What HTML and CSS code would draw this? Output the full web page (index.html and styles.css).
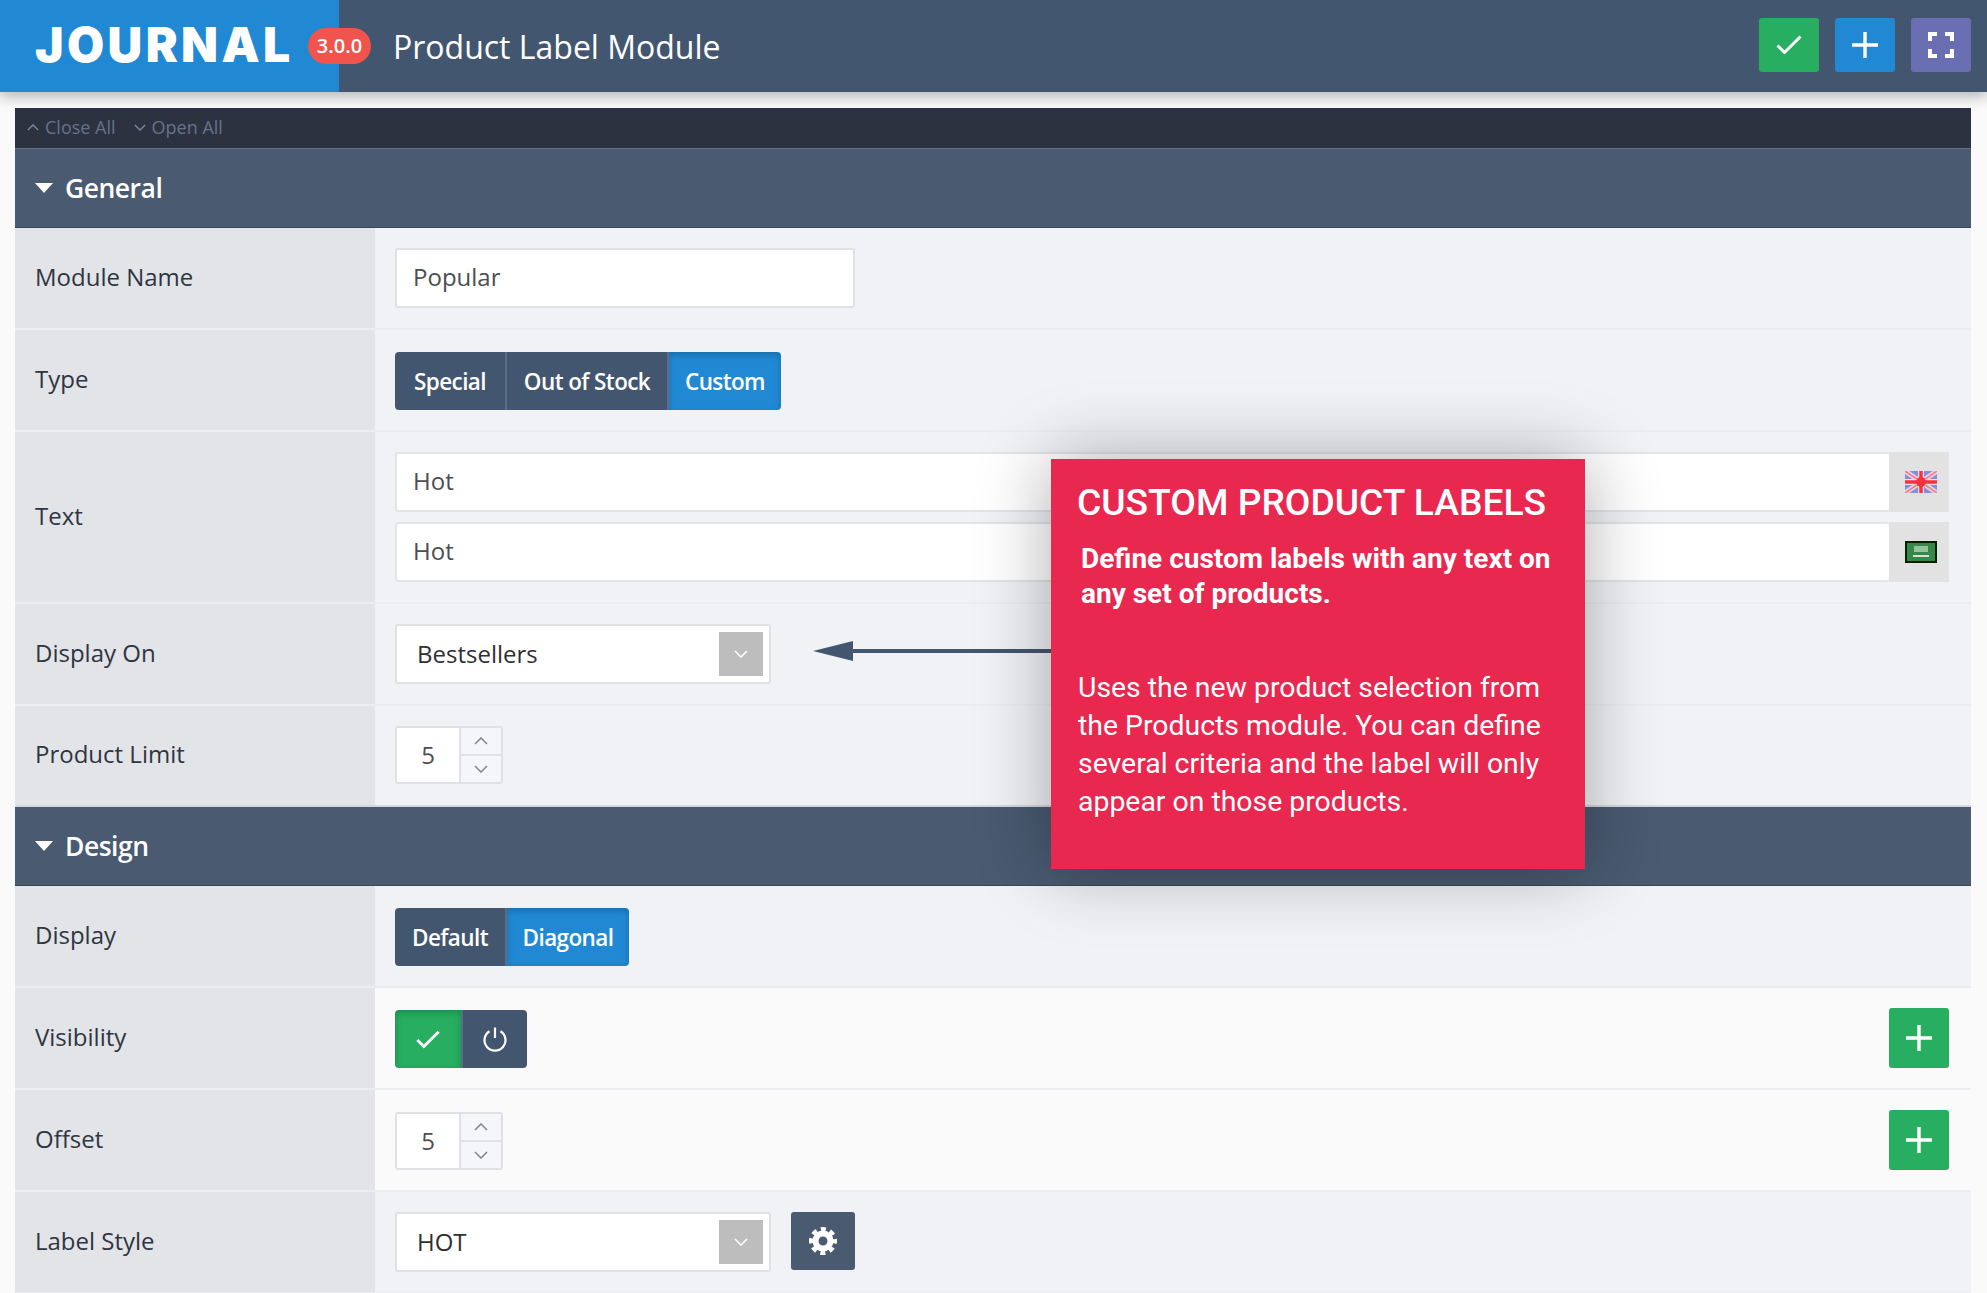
FILE: index.html
```html
<!DOCTYPE html>
<html lang="en">
<head>
  <meta charset="UTF-8">
  <title>Product Label Module</title>
  <link rel="stylesheet" href="styles.css">
</head>
<body>
  <svg class="defs" width="0" height="0">
    <symbol id="i-check" viewBox="0 0 26 20"><path d="M1.5 10.5 8.5 17.5 24.5 1.5" fill="none" stroke="#fff" stroke-width="3"/></symbol>
    <symbol id="i-plus" viewBox="0 0 26 26"><path d="M13 0V26M0 13H26" fill="none" stroke="#fff" stroke-width="3.4"/></symbol>
    <symbol id="i-full" viewBox="0 0 26 26"><path d="M9 2H2V9M17 2H24V9M9 24H2V17M17 24H24V17" fill="none" stroke="#fff" stroke-width="4"/></symbol>
    <symbol id="i-up" viewBox="0 0 14 8"><path d="M1 7 7 1 13 7" fill="none" stroke="#85888f" stroke-width="1.6"/></symbol>
    <symbol id="i-down" viewBox="0 0 14 8"><path d="M1 1 7 7 13 1" fill="none" stroke="#85888f" stroke-width="1.6"/></symbol>
    <symbol id="i-drop" viewBox="0 0 14 8"><path d="M1 1 7 7 13 1" fill="none" stroke="#fff" stroke-width="1.6"/></symbol>
    <symbol id="i-up-dim" viewBox="0 0 14 8"><path d="M1 7 7 1 13 7" fill="none" stroke="#7a879c" stroke-width="1.6"/></symbol>
    <symbol id="i-down-dim" viewBox="0 0 14 8"><path d="M1 1 7 7 13 1" fill="none" stroke="#7a879c" stroke-width="1.6"/></symbol>
  </svg>

  <header class="topbar">
    <div class="logo">
      <span class="logo-text">JOURNAL</span>
      <span class="version">3.0.0</span>
    </div>
    <h1 class="page-title">Product Label Module</h1>
    <div class="top-actions">
      <a class="top-btn green"><svg class="ic-check"><use href="#i-check"/></svg></a>
      <a class="top-btn blue"><svg class="ic-plus"><use href="#i-plus"/></svg></a>
      <a class="top-btn purple"><svg class="ic-plus"><use href="#i-full"/></svg></a>
    </div>
  </header>

  <main class="panel">
    <div class="toolbar">
      <a class="tool-link"><svg class="ic-tool"><use href="#i-up-dim"/></svg>Close All</a>
      <a class="tool-link"><svg class="ic-tool"><use href="#i-down-dim"/></svg>Open All</a>
    </div>

    <section>
      <h2 class="section-head"><span class="caret"></span>General</h2>

      <div class="row">
        <div class="label">Module Name</div>
        <div class="field"><div class="input short">Popular</div></div>
      </div>

      <div class="row">
        <div class="label">Type</div>
        <div class="field field-type">
          <div class="btn-group">
            <span class="seg seg-special">Special</span>
            <span class="seg seg-stock">Out of Stock</span>
            <span class="seg seg-custom active">Custom</span>
          </div>
        </div>
      </div>

      <div class="row">
        <div class="label">Text</div>
        <div class="field stack">
          <div class="lang-input">
            <div class="input wide">Hot</div>
            <div class="addon">
              <svg class="flag" viewBox="0 0 32 22">
                <rect width="32" height="22" fill="#7f90e4"/>
                <path d="M0 0 32 22M32 0 0 22" stroke="#f3cfd8" stroke-width="5"/>
                <path d="M0 0 32 22M32 0 0 22" stroke="#ee7f90" stroke-width="1.6"/>
                <path d="M16 0V22M0 11H32" stroke="#f9d9de" stroke-width="6"/>
                <path d="M16 0V22M0 11H32" stroke="#f8303f" stroke-width="3.500"/>
                <circle cx="16" cy="11" r="5" fill="#f8303f"/>
              </svg>
            </div>
          </div>
          <div class="lang-input">
            <div class="input wide">Hot</div>
            <div class="addon">
              <svg class="flag" viewBox="0 0 32 22">
                <rect width="32" height="22" fill="#021f04"/>
                <rect x="2" y="2" width="28" height="18" fill="#37864a"/>
                <rect x="9" y="5" width="14" height="6" fill="#93c59b"/>
                <rect x="8" y="14" width="16" height="2" fill="#cfe6d2"/>
              </svg>
            </div>
          </div>
        </div>
      </div>

      <div class="row">
        <div class="label">Display On</div>
        <div class="field">
          <div class="select">Bestsellers<span class="select-arrow"><svg class="ic-drop"><use href="#i-drop"/></svg></span></div>
        </div>
      </div>

      <div class="row last">
        <div class="label">Product Limit</div>
        <div class="field field-limit">
          <div class="spinner">
            <span class="spin-value">5</span>
            <span class="spin-btns">
              <span class="spin-btn"><svg class="ic-spin"><use href="#i-up"/></svg></span>
              <span class="spin-btn"><svg class="ic-spin"><use href="#i-down"/></svg></span>
            </span>
          </div>
        </div>
      </div>
    </section>

    <section>
      <h2 class="section-head"><span class="caret"></span>Design</h2>

      <div class="row">
        <div class="label">Display</div>
        <div class="field field-display">
          <div class="btn-group">
            <span class="seg seg-default">Default</span>
            <span class="seg seg-diagonal active">Diagonal</span>
          </div>
        </div>
      </div>

      <div class="row light">
        <div class="label">Visibility</div>
        <div class="field spread">
          <div class="btn-group">
            <span class="seg seg-on"><svg class="ic-on"><use href="#i-check"/></svg></span>
            <span class="seg seg-off">
              <svg class="ic-power" viewBox="0 0 26 26"><path d="M13 1.500V12M7.500 5.200A10.500 10.500 0 1 0 18.500 5.200" fill="none" stroke="#fff" stroke-width="2.200"/></svg>
            </span>
          </div>
          <a class="add-btn"><svg class="ic-plus"><use href="#i-plus"/></svg></a>
        </div>
      </div>

      <div class="row light">
        <div class="label">Offset</div>
        <div class="field spread">
          <div class="spinner">
            <span class="spin-value">5</span>
            <span class="spin-btns">
              <span class="spin-btn"><svg class="ic-spin"><use href="#i-up"/></svg></span>
              <span class="spin-btn"><svg class="ic-spin"><use href="#i-down"/></svg></span>
            </span>
          </div>
          <a class="add-btn"><svg class="ic-plus"><use href="#i-plus"/></svg></a>
        </div>
      </div>

      <div class="row">
        <div class="label">Label Style</div>
        <div class="field inline">
          <div class="select">HOT<span class="select-arrow"><svg class="ic-drop"><use href="#i-drop"/></svg></span></div>
          <a class="gear-btn">
            <svg class="ic-gear" viewBox="0 0 28 28">
              <circle cx="14" cy="14" r="7.500" fill="none" stroke="#fff" stroke-width="6"/>
              <circle cx="14" cy="14" r="11.500" fill="none" stroke="#fff" stroke-width="5" stroke-dasharray="4.900 4.130" stroke-dashoffset="2.450"/>
            </svg>
          </a>
        </div>
      </div>
    </section>
  </main>

  <div class="pointer"><span class="pointer-head"></span><span class="pointer-line"></span></div>

  <aside class="callout">
    <h3 class="callout-title">CUSTOM PRODUCT LABELS</h3>
    <p class="callout-lead">Define custom labels with any text on any set of products.</p>
    <p class="callout-body">Uses the new product selection from the Products module. You can define several criteria and the label will only appear on those products.</p>
  </aside>
</body>
</html>
```

FILE: styles.css
```css
html, body {
  margin: 0;
  height: 1293px;
  overflow: hidden;
}
body {
  position: relative;
  font-family: "Open Sans", sans-serif;
  background: #fafafa;
  color: #2f3542;
}
.defs {
  position: absolute;
}
svg {
  display: block;
}

/* top bar */
.topbar {
  display: flex;
  align-items: center;
  height: 92px;
  background: #43566f;
  box-shadow: 0 4px 14px rgba(0, 0, 0, .3);
  position: relative;
}
.logo {
  display: flex;
  align-items: center;
  box-sizing: border-box;
  width: 339px;
  height: 92px;
  padding: 0 0 3px 35px;
  background: #2189d4;
  position: relative;
}
.logo-text {
  font-family: Inter, sans-serif;
  font-weight: 900;
  font-size: 48px;
  letter-spacing: 3.400px;
  color: #fff;
}
.version {
  position: absolute;
  left: 308px;
  top: 28px;
  width: 63px;
  height: 36px;
  line-height: 36px;
  text-align: center;
  border-radius: 18px;
  background: #f0544c;
  color: #fff;
  font-size: 20px;
  font-weight: 600;
}
.page-title {
  margin: 0 0 0 54px;
  font-size: 32px;
  font-weight: 400;
  color: #fff;
}
.top-actions {
  display: flex;
  gap: 16px;
  margin: 0 16px 2px auto;
}
.top-btn {
  display: flex;
  align-items: center;
  justify-content: center;
  width: 60px;
  height: 54px;
  border-radius: 3px;
}
.green { background: #27ae60; }
.blue { background: #2189d4; }
.purple { background: #6a6fb3; }
.ic-check {
  width: 26px;
  height: 20px;
}
.ic-plus {
  width: 26px;
  height: 26px;
}

/* panel */
.panel {
  margin: 16px 16px 0 15px;
}
.toolbar {
  display: flex;
  align-items: center;
  gap: 18px;
  box-sizing: content-box;
  height: 38px;
  padding: 0 0 2px 12px;
  background: #2c3240;
  border-bottom: 1px solid #64748a;
}
.tool-link {
  display: flex;
  align-items: center;
  gap: 6px;
  font-size: 18px;
  color: #66738a;
}
.ic-tool {
  width: 12px;
  height: 7px;
}
.section-head {
  display: flex;
  align-items: center;
  gap: 12px;
  height: 78px;
  margin: 0;
  padding-left: 20px;
  background: #495a71;
  border-bottom: 1px solid #3a4656;
  color: #fff;
  font-size: 26.500px;
  font-weight: 600;
  letter-spacing: -.5px;
  line-height: 1;
}
.caret {
  width: 0;
  height: 0;
  border-left: 9px solid transparent;
  border-right: 9px solid transparent;
  border-top: 10px solid #fff;
}

/* form rows */
.row {
  display: grid;
  grid-template-columns: 360px 1fr;
  border-bottom: 2px solid #ebedf0;
  background: #f0f2f6;
}
.row.last {
  border-bottom: 2px solid #d5d8dd;
}
.row.light {
  background: #fafafa;
}
.label {
  display: flex;
  align-items: center;
  padding: 0 0 4px 20px;
  background: #e2e4e8;
  font-size: 24px;
}
.field {
  padding: 20px 22px 20px 20px;
}
.field-type {
  padding-top: 22px;
}
.field-limit {
  padding-bottom: 21px;
}
.field-display {
  padding-top: 22px;
}
.stack {
  display: flex;
  flex-direction: column;
  gap: 10px;
}
.spread {
  display: flex;
  justify-content: space-between;
  align-items: flex-end;
}
.inline {
  display: flex;
  align-items: flex-start;
  gap: 20px;
}
.input {
  box-sizing: border-box;
  display: flex;
  align-items: center;
  height: 60px;
  padding: 0 0 3px 16px;
  background: #fff;
  border: 2px solid #dfe1e5;
  border-radius: 3px;
  font-size: 24px;
  color: #4e4e52;
}
.short {
  width: 460px;
}
.wide {
  flex: 1;
  border-color: #e3e4e8;
  border-right: 0;
}
.lang-input {
  display: flex;
}
.addon {
  display: flex;
  align-items: center;
  justify-content: center;
  box-sizing: border-box;
  width: 60px;
  height: 60px;
  padding-left: 4px;
  background: #e2e2e2;
}
.flag {
  width: 32px;
  height: 22px;
  filter: blur(.7px);
}

/* segmented buttons */
.btn-group {
  display: inline-flex;
  height: 58px;
  border-radius: 4px;
  overflow: hidden;
}
.seg {
  display: flex;
  align-items: center;
  justify-content: center;
  box-sizing: border-box;
  height: 58px;
  background: #43566f;
  color: #fff;
  font-size: 22.500px;
  font-weight: 600;
  letter-spacing: -.6px;
  border-left: 2px solid #5c6e85;
}
.seg:first-child {
  border-left: 0;
}
.seg.active {
  background: #2189d4;
  box-shadow: inset 0 3px 7px rgba(0, 0, 0, .2);
}
.seg-special { width: 110px; }
.seg-stock { width: 162px; }
.seg-custom { width: 114px; }
.seg-default { width: 110px; }
.seg-diagonal { width: 124px; }
.seg-on {
  width: 66px;
  background: #27ae60;
  box-shadow: inset 0 3px 7px rgba(0, 0, 0, .2);
}
.seg-off { width: 66px; }
.ic-on {
  width: 24px;
  height: 19px;
}
.ic-power {
  width: 26px;
  height: 26px;
}
.add-btn {
  display: flex;
  align-items: center;
  justify-content: center;
  width: 60px;
  height: 60px;
  border-radius: 3px;
  background: #27ae60;
}

/* select */
.select {
  box-sizing: border-box;
  display: flex;
  align-items: center;
  width: 376px;
  height: 60px;
  padding-left: 20px;
  background: #fff;
  border: 2px solid #dfe1e5;
  border-radius: 3px;
  font-size: 24px;
  line-height: 30px;
  color: #2f2f33;
}
.select-arrow {
  display: flex;
  align-items: center;
  justify-content: center;
  width: 44px;
  height: 44px;
  margin-left: auto;
  margin-right: 6px;
  background: #bdbdbd;
}
.ic-drop {
  width: 14px;
  height: 8px;
}
.gear-btn {
  display: flex;
  align-items: center;
  justify-content: center;
  width: 64px;
  height: 58px;
  border-radius: 3px;
  background: #495a71;
}
.ic-gear {
  width: 28px;
  height: 28px;
}

/* number spinner */
.spinner {
  box-sizing: border-box;
  display: inline-flex;
  width: 108px;
  height: 58px;
  background: #f5f6fa;
  border: 2px solid #dfe1e5;
  border-radius: 3px;
}
.spin-value {
  display: flex;
  align-items: center;
  justify-content: center;
  box-sizing: border-box;
  width: 64px;
  padding-bottom: 2px;
  background: #fff;
  border-right: 2px solid #dfe1e5;
  font-size: 24px;
  color: #4e4e52;
}
.spin-btns {
  display: flex;
  flex: 1;
  flex-direction: column;
}
.spin-btn {
  display: flex;
  flex: 1;
  align-items: center;
  justify-content: center;
}
.spin-btn + .spin-btn {
  border-top: 2px solid #dfe1e5;
}
.ic-spin {
  width: 14px;
  height: 8px;
}

/* callout over the form */
.callout {
  position: absolute;
  left: 1051px;
  top: 459px;
  box-sizing: border-box;
  width: 534px;
  height: 410px;
  padding: 22px 20px 0 26px;
  background: #e9284f;
  color: #fff;
  font-family: Roboto, sans-serif;
  box-shadow: 0 0 70px rgba(0, 0, 0, .32);
}
.callout-title {
  margin: 0;
  font-size: 37.200px;
  font-weight: 500;
  line-height: 42px;
}
.callout-lead {
  margin: 18px 0 0 4px;
  font-size: 28px;
  font-weight: 700;
  line-height: 35px;
}
.callout-body {
  margin: 58px 0 0 1px;
  font-size: 28.400px;
  line-height: 38px;
}
.pointer {
  position: absolute;
  left: 813px;
  top: 641px;
  display: flex;
  align-items: center;
  width: 238px;
  height: 20px;
}
.pointer-head {
  border-top: 10px solid transparent;
  border-bottom: 10px solid transparent;
  border-right: 40px solid #43566f;
}
.pointer-line {
  flex: 1;
  height: 4px;
  background: #43566f;
}
```
